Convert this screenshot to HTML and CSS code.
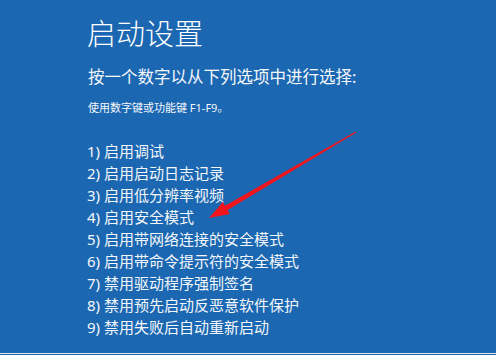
FILE: index.html
```html
<!DOCTYPE html>
<html lang="zh-CN">
<head>
    <meta charset="UTF-8">
    <meta name="viewport" content="width=device-width, initial-scale=1.0">
    <title>启动设置</title>
    <link rel="stylesheet" href="styles.css">
</head>
<body>

    <div class="screen">
        <h1 class="title">启动设置</h1>
        <p class="prompt">按一个数字以从下列选项中进行选择:</p>
        <p class="hint">使用数字键或功能键 F1-F9。</p>

        <ol class="options">
            <li>1) 启用调试</li>
            <li>2) 启用启动日志记录</li>
            <li>3) 启用低分辨率视频</li>
            <li>4) 启用安全模式</li>
            <li>5) 启用带网络连接的安全模式</li>
            <li>6) 启用带命令提示符的安全模式</li>
            <li>7) 禁用驱动程序强制签名</li>
            <li>8) 禁用预先启动反恶意软件保护</li>
            <li>9) 禁用失败后自动重新启动</li>
        </ol>

        <!-- 红色箭头 -->
        <svg class="arrow" width="496" height="355" viewBox="0 0 496 355">
            <polygon points="209,218 229.8,213.9 227.6,210.1 356.3,132.6 355.7,131.4 225,205.7 222.8,201.9" fill="#f2141c"/>
        </svg>
    </div>

</body>
</html>
```

FILE: styles.css
```css
body {
    margin: 0;
    font-family: "Noto Sans", "Noto Sans CJK SC", sans-serif;
    background-color: #1b67b1;
}

.screen {
    position: relative;
    height: 354px;
    box-sizing: border-box;
    padding: 16px 0 0 87px;
    background-color: #1b67b1;
    border-bottom: 1px solid #dfe6ee;
    color: #f4f7fb;
}

.title {
    margin: 0;
    font-size: 29px;
    line-height: 36px;
    font-weight: 300;
    color: #ffffff;
}

.prompt {
    margin: 14px 0 0 1px;
    font-size: 16.5px;
    line-height: 22px;
}

.hint {
    margin: 12px 0 0 1px;
    font-size: 11px;
    line-height: 16px;
}

.options {
    list-style: none;
    margin: 24px 0 0 0;
    padding: 0;
}

.options li {
    font-size: 15px;
    line-height: 22px;
}

/* 箭头 */
.arrow {
    position: absolute;
    left: 0;
    top: 0;
}
```
